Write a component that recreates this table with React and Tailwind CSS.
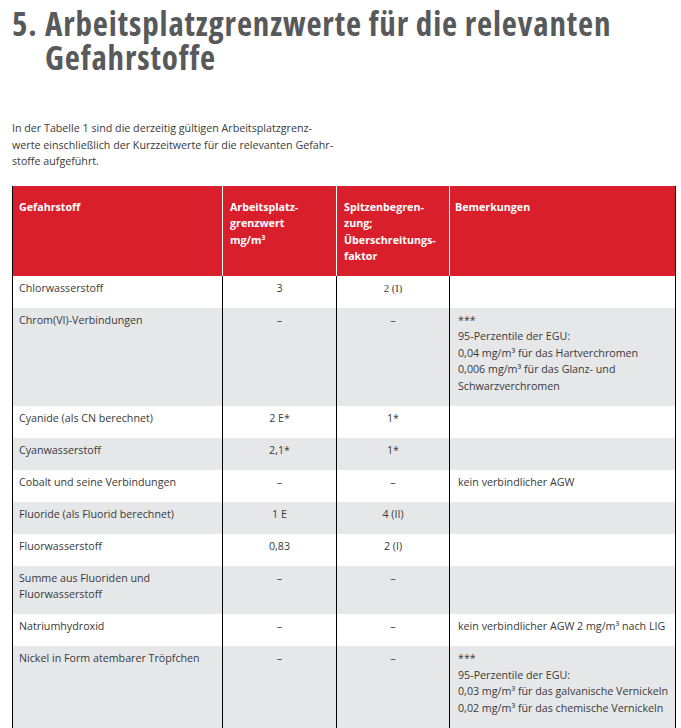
const rows = [
  { name: ['Chlorwasserstoff'], agw: '3', peak: '2 (I)', peakSerif: true, note: [] },
  {
    name: ['Chrom(VI)-Verbindungen'],
    agw: '–',
    peak: '–',
    note: [
      '***',
      '95-Perzentile der EGU:',
      '0,04 mg/m³ für das Hartverchromen',
      '0,006 mg/m³ für das Glanz- und',
      'Schwarzverchromen',
    ],
  },
  { name: ['Cyanide (als CN berechnet)'], agw: '2 E*', peak: '1*', note: [] },
  { name: ['Cyanwasserstoff'], agw: '2,1*', peak: '1*', note: [] },
  { name: ['Cobalt und seine Verbindungen'], agw: '–', peak: '–', note: ['kein verbindlicher AGW'] },
  { name: ['Fluoride (als Fluorid berechnet)'], agw: '1 E', peak: '4 (II)', note: [] },
  { name: ['Fluorwasserstoff'], agw: '0,83', peak: '2 (I)', note: [] },
  { name: ['Summe aus Fluoriden und', 'Fluorwasserstoff'], agw: '–', peak: '–', note: [] },
  { name: ['Natriumhydroxid'], agw: '–', peak: '–', note: ['kein verbindlicher AGW 2 mg/m³ nach LIG'] },
  {
    name: ['Nickel in Form atembarer Tröpfchen'],
    agw: '–',
    peak: '–',
    note: [
      '***',
      '95-Perzentile der EGU:',
      '0,03 mg/m³ für das galvanische Vernickeln',
      '0,02 mg/m³ für das chemische Vernickeln',
    ],
  },
  { name: [''], agw: '', peak: '', note: [] },
];

const Lines = ({ lines }) =>
  lines.map((l, i) => (
    <div key={i} className="whitespace-nowrap">
      {l || '\u00a0'}
    </div>
  ));

export default function App() {
  return (
    <div className="min-h-[728px] bg-white font-['Open_Sans',sans-serif] text-[#3a3a3a]">
      <h1 className="flex pl-[12px] pt-[7px] text-[33px] font-bold leading-[34px] tracking-[0.85px] text-[#58595b] font-stretch-[75%]">
        <span className="w-[33px] shrink-0">5.</span>
        <span>
          Arbeitsplatzgrenzwerte für die relevanten
          <br />
          Gefahrstoffe
        </span>
      </h1>

      <p className="ml-[12px] mt-[45px] text-[10.7px] leading-[16.5px]">
        In der Tabelle 1 sind die derzeitig gültigen Arbeitsplatzgrenz-
        <br />
        werte einschließlich der Kurzzeitwerte für die relevanten Gefahr-
        <br />
        stoffe aufgeführt.
      </p>

      <div className="ml-[12px] mt-[16px] w-[664px] border-x border-black text-[10.7px] leading-[16.5px]">
        <div className="grid grid-cols-[209px_114px_113px_1fr] bg-[#da1f2c] font-bold text-white">
          <div className="pb-[11px] pl-[6px] pt-[13px]">Gefahrstoff</div>
          <div className="border-l border-white pb-[11px] pl-[7px] pt-[13px]">
            Arbeitsplatz-
            <br />
            grenzwert
            <br />
            mg/m³
          </div>
          <div className="border-l border-white pb-[11px] pl-[7px] pt-[13px]">
            Spitzenbegren-
            <br />
            zung;
            <br />
            Überschreitungs-
            <br />
            faktor
          </div>
          <div className="border-l border-white pb-[11px] pl-[5px] pt-[13px]">Bemerkungen</div>
        </div>

        {rows.map((r, i) => (
          <div
            key={i}
            className={`grid grid-cols-[209px_114px_113px_1fr] ${i % 2 === 1 ? 'bg-[#e6e7e9]' : 'bg-white'}`}
          >
            <div className="pb-[11.5px] pl-[6px] pt-[4px]">
              <Lines lines={r.name} />
            </div>
            <div className="border-l border-black pb-[11.5px] pt-[4px] text-center">{r.agw}</div>
            <div
              className={`border-l border-black pb-[11.5px] pt-[4px] text-center ${
                r.peakSerif ? "font-['Liberation_Serif',serif]" : ''
              }`}
            >
              {r.peak}
            </div>
            <div className="border-l border-black pb-[11.5px] pl-[8px] pt-[4px]">
              <Lines lines={r.note} />
            </div>
          </div>
        ))}
      </div>
    </div>
  );
}
